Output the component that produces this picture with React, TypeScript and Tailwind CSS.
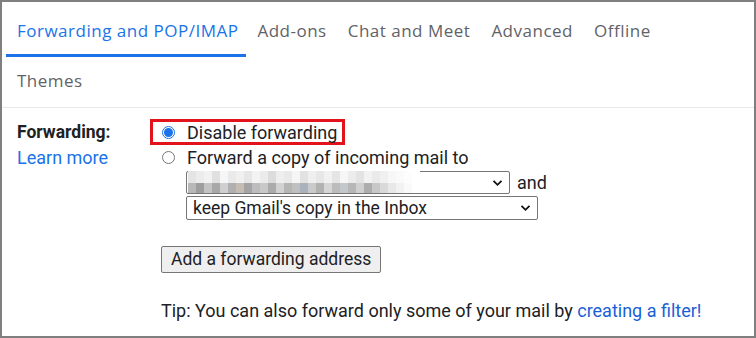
import React from 'react';

// Onglets des paramètres
const tabs = [
  { label: 'Forwarding and POP/IMAP', active: true },
  { label: 'Add-ons' },
  { label: 'Chat and Meet' },
  { label: 'Advanced' },
  { label: 'Offline' },
  { label: 'Themes' },
];

// Adresse floutée : deux rangées de pixels
const blurTop = [
  'bg-[#e4e4e4]', 'bg-[#ececec]', 'bg-[#f2f2f2]', 'bg-[#e0e0e0]', 'bg-[#f4f6f8]', 'bg-[#eaeaea]',
  'bg-[#f0f0f0]', 'bg-[#e6e6e6]', 'bg-[#f3f3f3]', 'bg-[#ebebeb]', 'bg-[#dcdcdc]', 'bg-[#eeeeee]',
  'bg-[#e9e9e9]', 'bg-[#f5f5f5]', 'bg-[#e2e2e2]', 'bg-[#efefef]', 'bg-[#e7e7e7]', 'bg-[#f1f1f1]',
  'bg-[#e5e5e5]', 'bg-[#f6f6f6]', 'bg-[#ececec]', 'bg-[#e3e3e3]', 'bg-[#f2f2f2]', 'bg-[#eaeaea]',
  'bg-[#f0f0f0]', 'bg-[#f7f7f7]', 'bg-[#fafafa]', 'bg-[#fdfdfd]', 'bg-white',
];
const blurBottom = [
  'bg-[#b8b8b8]', 'bg-[#9e9e9e]', 'bg-[#c4c4c4]', 'bg-[#a8a8a8]', 'bg-[#cfcfcf]', 'bg-[#b0b0b0]',
  'bg-[#c6bdb2]', 'bg-[#a4a4a4]', 'bg-[#bdbdbd]', 'bg-[#c9c9c9]', 'bg-[#ababab]', 'bg-[#d2d2d2]',
  'bg-[#b5b5b5]', 'bg-[#c0c0c0]', 'bg-[#a9b3bd]', 'bg-[#cacaca]', 'bg-[#b2b2b2]', 'bg-[#d6d6d6]',
  'bg-[#bcbcbc]', 'bg-[#c3c8cc]', 'bg-[#b7b7b7]', 'bg-[#d0d0d0]', 'bg-[#adadad]', 'bg-[#c8c8c8]',
  'bg-[#d9d9d9]', 'bg-[#e8e8e8]', 'bg-[#f2f2f2]', 'bg-[#fafafa]', 'bg-white',
];

const Chevron = () => (
  <svg width="11" height="8" viewBox="0 0 11 8" className="shrink-0">
    <path d="M1.5 1.8 L5.5 5.8 L9.5 1.8" fill="none" stroke="#111" strokeWidth="1.8" />
  </svg>
);

const Radio = ({ checked }: { checked?: boolean }) =>
  checked ? (
    <span className="w-[13px] h-[13px] rounded-full border border-[#1a73e8] bg-white flex items-center justify-center shrink-0">
      <span className="w-[9px] h-[9px] rounded-full bg-[#1a73e8]" />
    </span>
  ) : (
    <span className="w-[13px] h-[13px] rounded-full border border-[#767676] bg-white shrink-0" />
  );

const App = () => {
  return (
    <div className="w-[756px] h-[338px] border-2 border-[#7f7f7f] bg-white overflow-hidden text-[#202124] font-['Roboto',sans-serif]">
      {/* Barre d'onglets */}
      <div className="flex flex-wrap pl-[4px] pr-[40px] pt-[5px] border-b border-[#e8e8e8] font-['Open_Sans',sans-serif] text-[17px] tracking-[0.5px]">
        {tabs.map(tab => (
          <div
            key={tab.label}
            className={`h-[50px] pl-[11px] flex items-center border-b-[3px] pt-[1px] whitespace-nowrap ${
              tab.active ? 'pr-[8px] border-[#1a73e8] text-[#1a73e8]' : 'pr-[10px] border-transparent text-[#5f6368]'
            }`}
          >
            {tab.label}
          </div>
        ))}
      </div>

      {/* Contenu */}
      <div className="flex text-[18px]">
        <div className="w-[148px] pl-[15px] pt-[12px] leading-[25px]">
          <div className="font-bold text-[17.5px]">Forwarding:</div>
          <div className="text-[#1a73e8]">Learn more</div>
        </div>

        <div className="flex flex-col pt-[11px]">
          <div className="w-fit h-[26px] border-[3px] border-[#e3131b] pl-[9px] pr-[5px] flex items-center gap-[12px]">
            <Radio checked />
            <span>Disable forwarding</span>
          </div>
          <div className="h-[24px] pl-[12px] flex items-center gap-[12px]">
            <Radio />
            <span>Forward a copy of incoming mail to</span>
          </div>

          <div className="ml-[36px] mt-[2px] h-[23px] flex items-center gap-[7px] leading-[23px]">
            <div className="w-[324px] h-[23px] border border-[#767676] rounded-[2px] flex items-center pr-[6px]">
              <div className="flex flex-col ml-[1px] mt-[-1px]">
                <div className="flex">
                  {blurTop.map((c, i) => (
                    <span key={i} className={`w-[8px] h-[12px] ${c}`} />
                  ))}
                </div>
                <div className="flex">
                  {blurBottom.map((c, i) => (
                    <span key={i} className={`w-[8px] h-[10px] ${c}`} />
                  ))}
                </div>
              </div>
              <div className="flex-1" />
              <Chevron />
            </div>
            <span>and</span>
          </div>

          <div className="ml-[36px] mt-[2px] w-[352px] h-[24px] border border-[#767676] rounded-[2px] flex items-center pl-[6px] pr-[6px] text-[17.5px] leading-[22px]">
            <span className="flex-1">keep Gmail's copy in the Inbox</span>
            <Chevron />
          </div>

          <button className="ml-[11px] mt-[26px] w-fit h-[27px] px-[9px] bg-[#efefef] border border-[#767676] rounded-[2px] text-[17.5px] leading-[25px]">
            Add a forwarding address
          </button>

          <div className="ml-[11px] mt-[28px] leading-[20px]">
            Tip: You can also forward only some of your mail by{' '}
            <span className="text-[#1a5fd6]">creating a filter!</span>
          </div>
        </div>
      </div>
    </div>
  );
};

export default App;
